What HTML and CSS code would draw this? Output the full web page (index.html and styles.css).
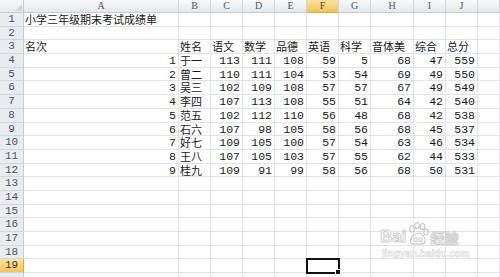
FILE: index.html
```html
<!DOCTYPE html>
<html>
<head>
<meta charset="utf-8">
<link rel="stylesheet" href="styles.css">
</head>
<body>
<div class="sheet">
  <div class="grid">
    <div class="corner"><svg width="10" height="10" viewBox="0 0 10 10"><polygon points="9,2 9,9 2,9" fill="#d3d6da"/></svg></div>
    <div class="ch">A</div><div class="ch">B</div><div class="ch">C</div><div class="ch">D</div><div class="ch">E</div><div class="ch sel">F</div><div class="ch">G</div><div class="ch">H</div><div class="ch">I</div><div class="ch">J</div><div class="ch last"></div>

    <div class="rh">1</div><div class="c t">小学三年级期末考试成绩单</div><div class="c"></div><div class="c"></div><div class="c"></div><div class="c"></div><div class="c"></div><div class="c"></div><div class="c"></div><div class="c"></div><div class="c"></div><div class="c"></div>
    <div class="rh">2</div><div class="c"></div><div class="c"></div><div class="c"></div><div class="c"></div><div class="c"></div><div class="c"></div><div class="c"></div><div class="c"></div><div class="c"></div><div class="c"></div><div class="c"></div>
    <div class="rh">3</div><div class="c t">名次</div><div class="c t">姓名</div><div class="c t">语文</div><div class="c t">数学</div><div class="c t">品德</div><div class="c t">英语</div><div class="c t">科学</div><div class="c t">音体美</div><div class="c t">综合</div><div class="c t">总分</div><div class="c"></div>
    <div class="rh">4</div><div class="c n">1</div><div class="c t">于一</div><div class="c n">113</div><div class="c n">111</div><div class="c n">108</div><div class="c n">59</div><div class="c n">5</div><div class="c n">68</div><div class="c n">47</div><div class="c n">559</div><div class="c"></div>
    <div class="rh">5</div><div class="c n">2</div><div class="c t">曾二</div><div class="c n">110</div><div class="c n">111</div><div class="c n">104</div><div class="c n">53</div><div class="c n">54</div><div class="c n">69</div><div class="c n">49</div><div class="c n">550</div><div class="c"></div>
    <div class="rh">6</div><div class="c n">3</div><div class="c t">吴三</div><div class="c n">102</div><div class="c n">109</div><div class="c n">108</div><div class="c n">57</div><div class="c n">57</div><div class="c n">67</div><div class="c n">49</div><div class="c n">549</div><div class="c"></div>
    <div class="rh">7</div><div class="c n">4</div><div class="c t">李四</div><div class="c n">107</div><div class="c n">113</div><div class="c n">108</div><div class="c n">55</div><div class="c n">51</div><div class="c n">64</div><div class="c n">42</div><div class="c n">540</div><div class="c"></div>
    <div class="rh">8</div><div class="c n">5</div><div class="c t">范五</div><div class="c n">102</div><div class="c n">112</div><div class="c n">110</div><div class="c n">56</div><div class="c n">48</div><div class="c n">68</div><div class="c n">42</div><div class="c n">538</div><div class="c"></div>
    <div class="rh">9</div><div class="c n">6</div><div class="c t">石六</div><div class="c n">107</div><div class="c n">98</div><div class="c n">105</div><div class="c n">58</div><div class="c n">56</div><div class="c n">68</div><div class="c n">45</div><div class="c n">537</div><div class="c"></div>
    <div class="rh">10</div><div class="c n">7</div><div class="c t">好七</div><div class="c n">109</div><div class="c n">105</div><div class="c n">100</div><div class="c n">57</div><div class="c n">54</div><div class="c n">63</div><div class="c n">46</div><div class="c n">534</div><div class="c"></div>
    <div class="rh">11</div><div class="c n">8</div><div class="c t">王八</div><div class="c n">107</div><div class="c n">105</div><div class="c n">103</div><div class="c n">57</div><div class="c n">55</div><div class="c n">62</div><div class="c n">44</div><div class="c n">533</div><div class="c"></div>
    <div class="rh">12</div><div class="c n">9</div><div class="c t">桂九</div><div class="c n">109</div><div class="c n">91</div><div class="c n">99</div><div class="c n">58</div><div class="c n">56</div><div class="c n">68</div><div class="c n">50</div><div class="c n">531</div><div class="c"></div>
    <div class="rh">13</div><div class="c"></div><div class="c"></div><div class="c"></div><div class="c"></div><div class="c"></div><div class="c"></div><div class="c"></div><div class="c"></div><div class="c"></div><div class="c"></div><div class="c"></div>
    <div class="rh">14</div><div class="c"></div><div class="c"></div><div class="c"></div><div class="c"></div><div class="c"></div><div class="c"></div><div class="c"></div><div class="c"></div><div class="c"></div><div class="c"></div><div class="c"></div>
    <div class="rh">15</div><div class="c"></div><div class="c"></div><div class="c"></div><div class="c"></div><div class="c"></div><div class="c"></div><div class="c"></div><div class="c"></div><div class="c"></div><div class="c"></div><div class="c"></div>
    <div class="rh">16</div><div class="c"></div><div class="c"></div><div class="c"></div><div class="c"></div><div class="c"></div><div class="c"></div><div class="c"></div><div class="c"></div><div class="c"></div><div class="c"></div><div class="c"></div>
    <div class="rh">17</div><div class="c"></div><div class="c"></div><div class="c"></div><div class="c"></div><div class="c"></div><div class="c"></div><div class="c"></div><div class="c"></div><div class="c"></div><div class="c"></div><div class="c"></div>
    <div class="rh">18</div><div class="c"></div><div class="c"></div><div class="c"></div><div class="c"></div><div class="c"></div><div class="c"></div><div class="c"></div><div class="c"></div><div class="c"></div><div class="c"></div><div class="c"></div>
    <div class="rh sel">19</div><div class="c"></div><div class="c"></div><div class="c"></div><div class="c"></div><div class="c"></div><div class="c active"><span class="handle"></span></div><div class="c"></div><div class="c"></div><div class="c"></div><div class="c"></div><div class="c"></div>
    <div class="rh"></div><div class="c"></div><div class="c"></div><div class="c"></div><div class="c"></div><div class="c"></div><div class="c"></div><div class="c"></div><div class="c"></div><div class="c"></div><div class="c"></div><div class="c"></div>
  </div>
  <div class="watermark">
    <div class="wm-top">
      <span class="wm-bai">Bai</span>
      <svg class="wm-paw" width="22" height="24" viewBox="0 0 22 24">
        <g fill="none" stroke="#c8c8c8" stroke-width="1.2">
          <ellipse cx="5" cy="7" rx="2.4" ry="3.2"/>
          <ellipse cx="10" cy="3.6" rx="2.3" ry="3"/>
          <ellipse cx="15.5" cy="4.5" rx="2.3" ry="3"/>
          <ellipse cx="19" cy="10" rx="2.2" ry="2.8"/>
          <path d="M4 21 C2 16 7 12 11 11 C15 11 19 15 18 20 C17 23 13 22 11 22 C8 22 5 23 4 21 Z"/>
        </g>
        <text x="11" y="20" text-anchor="middle" class="wm-du">du</text>
      </svg>
      <span class="wm-jy">经验</span>
    </div>
    <div class="wm-url">jingyan.baidu.com</div>
  </div>
</div>
</body>
</html>
```
FILE: styles.css
```css
html, body {
  margin: 0;
  padding: 0;
  background: #ffffff;
  overflow: hidden;
}
.sheet {
  position: relative;
  width: 500px;
  height: 277px;
  overflow: hidden;
}
.grid {
  display: grid;
  grid-template-columns: 24px 155px 32px 32px 32px 32px 32px 32px 43px 32px 32px 22px;
  grid-template-rows: 13px repeat(20, 13.7px);
  font-family: "Liberation Mono", "Noto Sans CJK SC", monospace;
  font-size: 11.5px;
  color: #1a1a1a;
}
.corner {
  background: linear-gradient(#f7f8fa, #e6e9ed);
  border-right: 1px solid #c6cbd1;
  border-bottom: 1px solid #c6cbd1;
  display: flex;
  align-items: flex-end;
  justify-content: flex-end;
  box-sizing: border-box;
}
.corner svg { display: block; }
.ch {
  box-sizing: border-box;
  background: linear-gradient(#f9fafb, #e4e8ec);
  border-right: 1px solid #d2d6dc;
  border-bottom: 1px solid #c6cbd1;
  color: #4f5760;
  font-family: "Liberation Serif", serif;
  font-size: 10px;
  line-height: 12px;
  text-align: center;
}
.ch.sel {
  background: linear-gradient(#fbe3a2, #f2c55c);
  border-bottom: 1px solid #e4a83a;
  color: #454545;
}
.rh {
  box-sizing: border-box;
  background: #e9ecf0;
  border-right: 1px solid #c6cbd1;
  border-bottom: 1px solid #d3d7dc;
  color: #4f5760;
  font-family: "Liberation Mono", monospace;
  font-size: 11px;
  line-height: 13px;
  text-align: center;
}
.rh.sel {
  background: linear-gradient(#fbe3a2, #f2c55c);
  border-right: 1px solid #e4a83a;
  color: #3a3a3a;
}
.c {
  box-sizing: border-box;
  border-right: 1px solid #e1e3e5;
  border-bottom: 1px solid #e1e3e5;
  line-height: 13px;
  white-space: nowrap;
  overflow: visible;
  position: relative;
}
.c.t {
  font-family: "Noto Sans CJK SC", sans-serif;
  font-size: 11px;
  line-height: 13px;
  padding-left: 1px;
  color: #1a1a1a;
}
.c.n {
  text-align: right;
  padding-right: 2px;
}
.c.active {
  outline: 2px solid #111111;
  outline-offset: -1px;
  z-index: 2;
}
.handle {
  position: absolute;
  right: -3px;
  bottom: -3px;
  width: 4px;
  height: 4px;
  background: #111111;
  border: 1px solid #ffffff;
}
.watermark {
  position: absolute;
  left: 380px;
  top: 222px;
  width: 100px;
  color: #dddddd;
  pointer-events: none;
}
.wm-top {
  display: flex;
  align-items: flex-end;
  gap: 1px;
}
.wm-bai {
  font-family: "Liberation Sans", sans-serif;
  font-weight: bold;
  font-size: 17px;
  line-height: 18px;
  color: #ffffff;
  -webkit-text-stroke: 1px #cfcfcf;
}
.wm-paw { display: block; }
.wm-du {
  font-family: "Liberation Sans", sans-serif;
  font-size: 8px;
  font-weight: bold;
  fill: #ffffff;
  stroke: #cccccc;
  stroke-width: 0.5px;
}
.wm-jy {
  font-family: "Noto Sans CJK SC", sans-serif;
  font-size: 14px;
  line-height: 18px;
  font-weight: bold;
  color: #ffffff;
  -webkit-text-stroke: 1px #cfcfcf;
}
.wm-url {
  font-family: "Liberation Sans", sans-serif;
  font-size: 10px;
  font-weight: bold;
  color: #ffffff;
  -webkit-text-stroke: 0.6px #d8d8d8;
  margin-top: 2px;
  padding-left: 2px;
}
```
